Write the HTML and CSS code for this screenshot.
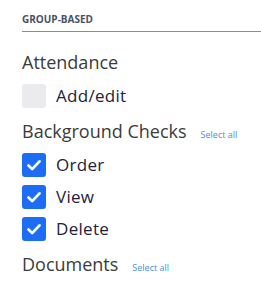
FILE: index.html
```html
<!DOCTYPE html>
<html lang="en">
<head>
    <meta charset="UTF-8">
    <meta name="viewport" content="width=device-width, initial-scale=1.0">
    <title>Permissions</title>
    <link rel="stylesheet" href="styles.css">
</head>
<body>
    <div class="panel">
        <div class="section-title">Group-based</div>

        <div class="group first">
            <div class="group-header">
                <span class="group-name">Attendance</span>
            </div>
            <label class="perm">
                <span class="box"></span>
                <span class="perm-name">Add/edit</span>
            </label>
        </div>

        <div class="group">
            <div class="group-header">
                <span class="group-name">Background Checks</span>
                <a class="select-all" href="#">Select all</a>
            </div>
            <label class="perm">
                <span class="box checked"><svg viewBox="0 0 24 24"><path d="M6 12.5l4 4 8-8.5"/></svg></span>
                <span class="perm-name">Order</span>
            </label>
            <label class="perm">
                <span class="box checked"><svg viewBox="0 0 24 24"><path d="M6 12.5l4 4 8-8.5"/></svg></span>
                <span class="perm-name">View</span>
            </label>
            <label class="perm">
                <span class="box checked"><svg viewBox="0 0 24 24"><path d="M6 12.5l4 4 8-8.5"/></svg></span>
                <span class="perm-name">Delete</span>
            </label>
        </div>

        <div class="group">
            <div class="group-header">
                <span class="group-name">Documents</span>
                <a class="select-all" href="#">Select all</a>
            </div>
        </div>
    </div>
</body>
</html>
```

FILE: styles.css
```css
body {
    margin: 0;
    padding: 0;
    background: #ffffff;
    font-family: "Open Sans", "Noto Sans", sans-serif;
}
.panel {
    padding: 13px 0 0 22px;
}
.section-title {
    font-size: 10px;
    line-height: 13.6px;
    font-weight: bold;
    text-transform: uppercase;
    color: #4a5068;
    padding-bottom: 4px;
    border-bottom: 1px solid #8c8c8c;
}
.group {
    margin-top: 11px;
}
.group.first {
    margin-top: 18px;
}
.group-header {
    display: flex;
    align-items: baseline;
    height: 26px;
}
.group-name {
    font-size: 18px;
    color: #3b3b3b;
}
.select-all {
    margin-left: 14px;
    font-size: 9px;
    color: #4a8ee0;
    text-decoration: none;
}
.perm {
    display: flex;
    align-items: center;
    margin-top: 8px;
    height: 24px;
}
.box {
    width: 24px;
    height: 24px;
    border-radius: 3px;
    background: #ebebee;
    display: flex;
    align-items: center;
    justify-content: center;
}
.box.checked {
    background: #1d6cf6;
}
.box svg {
    width: 22px;
    height: 22px;
    fill: none;
    stroke: white;
    stroke-width: 3;
    stroke-linecap: round;
    stroke-linejoin: round;
}
.perm-name {
    margin-left: 10px;
    font-size: 17px;
    color: #22223a;
    letter-spacing: 0.3px;
}
```
